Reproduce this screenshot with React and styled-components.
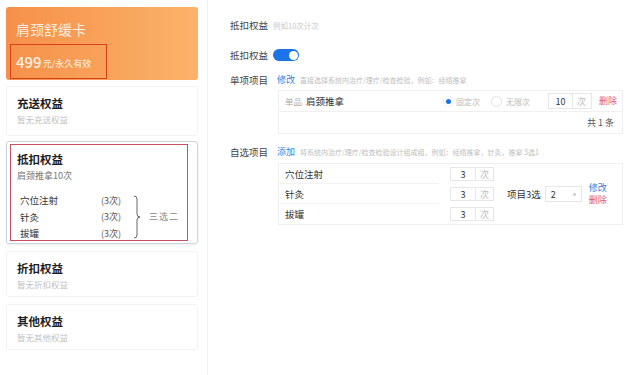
import React from "react";
import styled, { createGlobalStyle } from "styled-components";

const Global = createGlobalStyle`
  html, body { margin: 0; padding: 0; background: #fff; }
  body { font-family: "Noto Sans CJK SC", "Noto Sans", sans-serif; color: #333; }
  * { box-sizing: border-box; }
`;

const Page = styled.div`
  display: flex;
  width: 640px;
  height: 375px;
  overflow: hidden;
`;

const Sidebar = styled.div`
  width: 208px;
  flex: none;
  border-right: 1px solid #efefef;
  padding: 7px 9px 0 6px;
  display: flex;
  flex-direction: column;
  gap: 6px;
`;

const CardTop = styled.div`
  height: 73px;
  border-radius: 3px;
  background: linear-gradient(90deg, #f6904a 0%, #f9a55c 60%, #fbb26a 100%);
  padding: 14px 4px 0 4px;
  display: flex;
  flex-direction: column;
`;

const CardTitle = styled.div`
  font-size: 14px;
  line-height: 16px;
  color: rgba(255, 255, 255, 0.85);
  padding-left: 6px;
  height: 23px;
`;

const PriceBox = styled.div`
  width: 97px;
  height: 35px;
  border: 1.5px solid #d8401c;
  display: flex;
  align-items: center;
  padding-left: 5px;
  color: rgba(255, 255, 255, 0.9);
`;

const Price = styled.span`
  font-size: 15px;
  font-weight: 500;
`;

const PriceUnit = styled.span`
  font-size: 9px;
  margin-left: 1px;
  margin-top: 3px;
`;

const Card = styled.div`
  height: ${(p) => p.$h}px;
  margin-top: ${(p) => p.$mt || 0}px;
  border: 1px solid ${(p) => (p.$active ? "#c9d5de" : "#f3f3f3")};
  border-radius: 3px;
  box-shadow: ${(p) => (p.$active ? "0 1px 3px rgba(0,0,0,0.08)" : "none")};
  padding: ${(p) => (p.$active ? "2px 9px 2px 3px" : "8px 10px 0 10px")};
`;

const CardHead = styled.div`
  font-size: 11.5px;
  font-weight: 700;
  color: #1f1f1f;
  line-height: 16px;
`;

const CardSub = styled.div`
  font-size: 8.5px;
  color: #c2c2c2;
  margin-top: 2px;
  line-height: 12px;
`;

const Highlight = styled.div`
  height: 100%;
  border: 1.5px solid #c5505f;
  padding: 6px 6px 0 6px;
`;

const Desc = styled.div`
  font-size: 9px;
  color: #777;
  margin-top: 2px;
  line-height: 14px;
`;

const Choice = styled.div`
  display: flex;
  align-items: center;
  margin-top: 9px;
`;

const ChoiceList = styled.div`
  display: flex;
  flex-direction: column;
  padding-left: 3px;
`;

const ChoiceRow = styled.div`
  display: flex;
  height: 16.5px;
  align-items: center;
  font-size: 9.5px;
  color: #333;
`;

const ChoiceName = styled.span`
  width: 81px;
`;

const ChoiceCount = styled.span`
  width: 32px;
  font-size: 9px;
  color: #555;
`;

const Brace = styled.svg`
  width: 8px;
  height: 44px;
  flex: none;
`;

const ChoiceNote = styled.span`
  font-size: 9px;
  color: #888;
  margin-left: 8px;
  letter-spacing: 1px;
`;

const Main = styled.div`
  flex: 1;
  padding: 17px 17px 0 22px;
  display: flex;
  flex-direction: column;
`;

const FormRow = styled.div`
  display: flex;
  align-items: center;
  height: ${(p) => p.$h}px;
  margin-top: ${(p) => p.$mt || 0}px;
  white-space: nowrap;
`;

const Label = styled.div`
  width: 43px;
  flex: none;
  font-size: 9.5px;
  color: #444;
`;

const Placeholder = styled.div`
  font-size: 7.5px;
  color: #c8c8c8;
`;

const Toggle = styled.div`
  width: 26px;
  height: 12px;
  border-radius: 6px;
  background: #1a73e8;
  position: relative;
  &::after {
    content: "";
    position: absolute;
    right: 1.5px;
    top: 1.5px;
    width: 9px;
    height: 9px;
    border-radius: 50%;
    background: #fff;
  }
`;

const LinkText = styled.span`
  font-size: 9px;
  color: ${(p) => (p.$danger ? "#e4566d" : "#3b7ddd")};
  margin-left: ${(p) => p.$ml ?? 0}px;
  line-height: 12px;
  white-space: nowrap;
  flex: none;
`;

const Helper = styled.span`
  font-size: 7px;
  color: #bdbdbd;
  margin-left: 5px;
`;

const TableBox = styled.div`
  margin-left: 48px;
  width: 345px;
  border: 1px solid #efefef;
  margin-top: ${(p) => p.$mt || 0}px;
`;

const TRow = styled.div`
  display: flex;
  align-items: center;
  height: ${(p) => p.$h}px;
  border-bottom: ${(p) => (p.$last ? "none" : "1px solid #f0f0f0")};
  padding: 0 6px;
  white-space: nowrap;
  & > * { flex: none; }
`;

const Muted = styled.span`
  font-size: 8.5px;
  color: #aaa;
`;

const Name = styled.span`
  font-size: 9.5px;
  color: #333;
  margin-left: ${(p) => p.$ml ?? 0}px;
`;

const Radio = styled.span`
  display: inline-flex;
  align-items: center;
  font-size: 8px;
  color: #bbb;
  margin-left: ${(p) => p.$ml}px;
  &::before {
    content: "";
    width: ${(p) => (p.$on ? 5 : 9)}px;
    height: ${(p) => (p.$on ? 5 : 9)}px;
    border-radius: 50%;
    margin-right: ${(p) => (p.$on ? 5 : 4)}px;
    margin-left: ${(p) => (p.$on ? 2 : 0)}px;
    background: ${(p) => (p.$on ? "#1a73e8" : "#fff")};
    border: ${(p) => (p.$on ? "none" : "1px solid #e3e3e3")};
    box-shadow: ${(p) => (p.$on ? "0 0 0 2px #fff, 0 0 0 3px #eef2f8" : "none")};
  }
`;

const NumInput = styled.div`
  display: flex;
  height: ${(p) => p.$h}px;
  margin-left: ${(p) => p.$ml}px;
  border: 1px solid #e6e6e6;
  font-size: 9px;
`;

const NumValue = styled.div`
  width: ${(p) => p.$w}px;
  display: flex;
  align-items: center;
  justify-content: center;
  color: #333;
  border-right: 1px solid #e6e6e6;
`;

const NumUnit = styled.div`
  width: ${(p) => p.$w}px;
  display: flex;
  align-items: center;
  padding-left: 4px;
  color: #bbb;
`;

const Total = styled.div`
  margin-left: auto;
  font-size: 9px;
  color: #555;
  padding-right: 2px;
`;

const PickBox = styled.div`
  display: flex;
  white-space: nowrap;
`;

const PickNames = styled.div`
  width: 160px;
  display: flex;
  flex-direction: column;
`;

const PickName = styled.div`
  height: 20px;
  display: flex;
  align-items: center;
  padding-left: 6px;
  font-size: 9.5px;
  color: #333;
  border-bottom: ${(p) => (p.$last ? "none" : "1px solid #f3f3f3")};
`;

const PickInputs = styled.div`
  display: flex;
  flex-direction: column;
  gap: 6px;
  padding-top: 3px;
  margin-left: 11px;
`;

const PickSide = styled.div`
  display: flex;
  align-items: center;
  margin-left: 13px;
`;

const SideLabel = styled.span`
  font-size: 9.5px;
  color: #333;
`;

const Select = styled.div`
  width: 37px;
  height: 16px;
  border: 1px solid #e6e6e6;
  margin-left: 4px;
  display: flex;
  align-items: center;
  justify-content: space-between;
  padding: 0 5px;
  font-size: 9px;
  color: #333;
  &::after {
    content: "";
    width: 3px;
    height: 3px;
    border-radius: 50%;
    background: #ccc;
  }
`;

const Actions = styled.div`
  display: flex;
  flex-direction: column;
  margin-left: 7px;
`;

export default function App() {
  const picks = ["穴位注射", "针灸", "拔罐"];
  return (
    <Page>
      <Global />
      <Sidebar>
        <CardTop>
          <CardTitle>肩颈舒缓卡</CardTitle>
          <PriceBox>
            <Price>499</Price>
            <PriceUnit>元/永久有效</PriceUnit>
          </PriceBox>
        </CardTop>
        <Card $h={50}>
          <CardHead>充送权益</CardHead>
          <CardSub>暂无充送权益</CardSub>
        </Card>
        <Card $h={103} $active $mt={-1}>
          <Highlight>
            <CardHead>抵扣权益</CardHead>
            <Desc>肩颈推拿10次</Desc>
            <Choice>
              <ChoiceList>
                <ChoiceRow><ChoiceName>穴位注射</ChoiceName><ChoiceCount>(3次)</ChoiceCount></ChoiceRow>
                <ChoiceRow><ChoiceName>针灸</ChoiceName><ChoiceCount>(3次)</ChoiceCount></ChoiceRow>
                <ChoiceRow><ChoiceName>拔罐</ChoiceName><ChoiceCount>(3次)</ChoiceCount></ChoiceRow>
              </ChoiceList>
              <Brace viewBox="0 0 8 44">
                <path d="M1 1 Q4 1 4 4 L4 19 Q4 22 7 22 Q4 22 4 25 L4 40 Q4 43 1 43" fill="none" stroke="#555" strokeWidth="0.9" />
              </Brace>
              <ChoiceNote>三选二</ChoiceNote>
            </Choice>
          </Highlight>
        </Card>
        <Card $h={46} $mt={1}>
          <CardHead>折扣权益</CardHead>
          <CardSub>暂无折扣权益</CardSub>
        </Card>
        <Card $h={46} $mt={1}>
          <CardHead>其他权益</CardHead>
          <CardSub>暂无其他权益</CardSub>
        </Card>
      </Sidebar>
      <Main>
        <FormRow $h={16}>
          <Label>抵扣权益</Label>
          <Placeholder>例如10次计次</Placeholder>
        </FormRow>
        <FormRow $h={16} $mt={14}>
          <Label>抵扣权益</Label>
          <Toggle />
        </FormRow>
        <FormRow $h={16} $mt={9}>
          <Label>单项项目</Label>
          <LinkText $ml={4}>修改</LinkText>
          <Helper>直接选择系统内治疗/理疗/检查检验，例如：经络推拿</Helper>
        </FormRow>
        <TableBox $mt={2}>
          <TRow $h={21}>
            <Muted>单品</Muted>
            <Name $ml={4}>肩颈推拿</Name>
            <Radio $on $ml={100}>固定次</Radio>
            <Radio $ml={11}>无限次</Radio>
            <NumInput $h={16} $ml={18}>
              <NumValue $w={24}>10</NumValue>
              <NumUnit $w={18}>次</NumUnit>
            </NumInput>
            <LinkText $danger $ml={7}>删除</LinkText>
          </TRow>
          <TRow $h={21} $last>
            <Total>共 1 条</Total>
          </TRow>
        </TableBox>
        <FormRow $h={16} $mt={10}>
          <Label>自选项目</Label>
          <LinkText $ml={4}>添加</LinkText>
          <Helper>将系统内治疗/理疗/检查检验设计组成组，例如：经络推拿，针灸，推拿 3选1</Helper>
        </FormRow>
        <TableBox $mt={3}>
          <PickBox>
            <PickNames>
              {picks.map((n, i) => (
                <PickName key={n} $last={i === picks.length - 1}>{n}</PickName>
              ))}
            </PickNames>
            <PickInputs>
              {picks.map((n) => (
                <NumInput key={n} $h={14} $ml={0}>
                  <NumValue $w={25}>3</NumValue>
                  <NumUnit $w={17}>次</NumUnit>
                </NumInput>
              ))}
            </PickInputs>
            <PickSide>
              <SideLabel>项目3选</SideLabel>
              <Select>2</Select>
              <Actions>
                <LinkText>修改</LinkText>
                <LinkText $danger>删除</LinkText>
              </Actions>
            </PickSide>
          </PickBox>
        </TableBox>
      </Main>
    </Page>
  );
}
